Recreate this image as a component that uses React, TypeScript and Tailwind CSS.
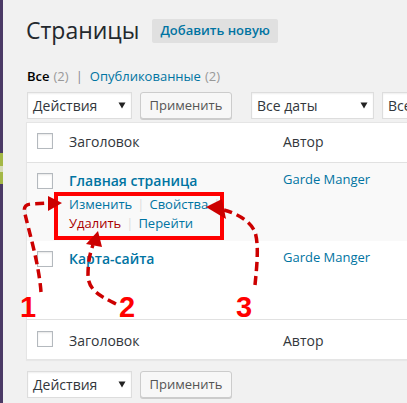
import React from "react";

const font = { fontFamily: '"Open Sans", "DejaVu Sans", sans-serif' };

function Checkbox() {
  return (
    <div className="w-[16px] h-[16px] border border-[#b4b9be] bg-white shadow-[inset_0_1px_2px_rgba(0,0,0,0.1)]" />
  );
}

function Arrow() {
  return (
    <svg width="8" height="7" viewBox="0 0 8 7" className="shrink-0">
      <path d="M0.5 0.5 L7.5 0.5 L4 6.5 Z" fill="#222" />
    </svg>
  );
}

function Select({ label, w }: { label: string; w: string }) {
  return (
    <div
      className={`${w} h-[27px] shrink-0 bg-white border border-[#ddd] shadow-[inset_0_1px_2px_rgba(0,0,0,0.07)] flex items-center pl-[5px] pr-[5px] justify-between text-[14px] text-[#32373c]`}
    >
      <span>{label}</span>
      <Arrow />
    </div>
  );
}

function ApplyBtn() {
  return (
    <div className="w-[92px] h-[27px] shrink-0 bg-[#f7f7f7] border border-[#ccc] rounded-[3px] shadow-[0_1px_0_#ccc] flex items-center justify-center text-[13px] text-[#555]">
      Применить
    </div>
  );
}

function HeaderRow({ footer }: { footer?: boolean }) {
  return (
    <div
      className={`grid grid-cols-[42px_214px_1fr] h-[40px] ${
        footer ? "border-t border-[#e1e1e1]" : "border-b border-[#e1e1e1]"
      }`}
    >
      <div className={`pl-[10px] ${footer ? "pt-[11px]" : "pt-[10px]"}`}>
        <Checkbox />
      </div>
      <div className={`text-[14px] leading-[19px] text-[#32373c] ${footer ? "pt-[11px]" : "pt-[9px]"}`}>
        Заголовок
      </div>
      <div className={`text-[14px] leading-[19px] text-[#32373c] ${footer ? "pt-[11px]" : "pt-[9px]"}`}>
        Автор
      </div>
    </div>
  );
}

function DataRow({ title, bg, actions }: { title: string; bg: string; actions: boolean }) {
  return (
    <div className={`grid grid-cols-[42px_214px_1fr] h-[78px] ${bg}`}>
      <div className="pl-[10px] pt-[10px]">
        <Checkbox />
      </div>
      <div className="pt-[9px]">
        <div className="text-[14px] leading-[18px] font-semibold text-[#0074a2]">{title}</div>
        <div className={`pt-[5px] text-[13px] leading-[19px] ${actions ? "" : "invisible"}`}>
          <div className="flex items-center">
            <span className="text-[#0074a2]">Изменить</span>
            <span className="text-[#ddd] px-[5px]">|</span>
            <span className="text-[#0074a2]">Свойства</span>
            <span className="text-[#ddd] px-[5px]">|</span>
          </div>
          <div className="flex items-center">
            <span className="text-[#a00]">Удалить</span>
            <span className="text-[#ddd] px-[5px]">|</span>
            <span className="text-[#0074a2]">Перейти</span>
          </div>
        </div>
      </div>
      <div className="pt-[7px] text-[13px] leading-[19px] text-[#0074a2]">Garde Manger</div>
    </div>
  );
}

export default function App() {
  return (
    <div className="relative w-[407px] h-[403px] overflow-hidden bg-[#f1f1f1] flex" style={font}>
      {/* admin menu edge */}
      <div className="w-[3px] h-full bg-[#4b3a66] flex flex-col shrink-0">
        <div className="h-[153px]" />
        <div className="h-[13px] bg-[#a4b846]" />
        <div className="h-[6px] bg-[#d6dcb6]" />
        <div className="h-[12px] bg-[#a4b846]" />
      </div>

      <div className="pl-[23px] flex flex-col w-[460px] shrink-0">
        <div className="flex items-center mt-[16px] h-[29px]">
          <h1 className="text-[23px] leading-[29px] text-[#23282d] font-normal">Страницы</h1>
          <div className="ml-[13px] h-[24px] px-[8px] bg-[#e0e0e0] rounded-[2px] flex items-center text-[13px] font-semibold text-[#0074a2]">
            Добавить новую
          </div>
        </div>

        <div className="mt-[22px] h-[18px] pl-[1px] text-[13px] leading-[18px] flex">
          <span className="text-black font-semibold">Все</span>
          <span className="text-[#999] ml-[4px]">(2)</span>
          <span className="text-[#888] mx-[7px]">|</span>
          <span className="text-[#0074a2]">Опубликованные</span>
          <span className="text-[#999] ml-[4px]">(2)</span>
        </div>

        <div className="mt-[7px] flex pl-[1px]">
          <Select label="Действия" w="w-[105px]" />
          <div className="ml-[8px]">
            <ApplyBtn />
          </div>
          <div className="ml-[19px]">
            <Select label="Все даты" w="w-[123px]" />
          </div>
          <div className="ml-[8px]">
            <Select label="Все рубрики" w="w-[120px]" />
          </div>
        </div>

        <div className="mt-[3px] bg-white border border-[#e5e5e5] shadow-[0_1px_1px_rgba(0,0,0,0.04)]">
          <HeaderRow />
          <DataRow title="Главная страница" bg="bg-[#f9f9f9]" actions />
          <DataRow title="Карта-сайта" bg="bg-white" actions={false} />
          <HeaderRow footer />
        </div>

        <div className="mt-[11px] flex pl-[1px]">
          <Select label="Действия" w="w-[105px]" />
          <div className="ml-[8px]">
            <ApplyBtn />
          </div>
        </div>
      </div>

      {/* annotation: red box */}
      <div className="absolute left-[54px] top-[192px] w-[170px] h-[48px] border-[4px] border-[#ff0000] pointer-events-none" />

      {/* annotation: dashed arrows */}
      <svg
        className="absolute left-0 top-0 pointer-events-none"
        width="407"
        height="403"
        viewBox="0 0 407 403"
      >
        <g fill="none" stroke="#cc0000" strokeWidth="3.5" strokeDasharray="9 5">
          <path d="M41,292 C39,265 30,235 25,214 Q22,204 32,204 L49,203" />
          <path d="M116,304 C100,296 88,290 88,275 C88,262 90,253 93,245" />
          <path d="M255,285 C257,265 259,245 255,232 C250,221 238,214 224,210" />
        </g>
        <g fill="#cc0000">
          <polygon points="62,203 48,196 48,211" />
          <polygon points="98,231 86,244 102,247" />
          <polygon points="206,207 222,199 226,219" />
        </g>
      </svg>

      {/* annotation numbers */}
      <span
        className="absolute left-[20px] top-[293px] text-[29px] leading-[29px] font-bold text-[#ff0000]"
        style={{ fontFamily: '"Liberation Sans", Arial, sans-serif' }}
      >
        1
      </span>
      <span
        className="absolute left-[119px] top-[293px] text-[29px] leading-[29px] font-bold text-[#ff0000]"
        style={{ fontFamily: '"Liberation Sans", Arial, sans-serif' }}
      >
        2
      </span>
      <span
        className="absolute left-[236px] top-[293px] text-[29px] leading-[29px] font-bold text-[#ff0000]"
        style={{ fontFamily: '"Liberation Sans", Arial, sans-serif' }}
      >
        3
      </span>
    </div>
  );
}
